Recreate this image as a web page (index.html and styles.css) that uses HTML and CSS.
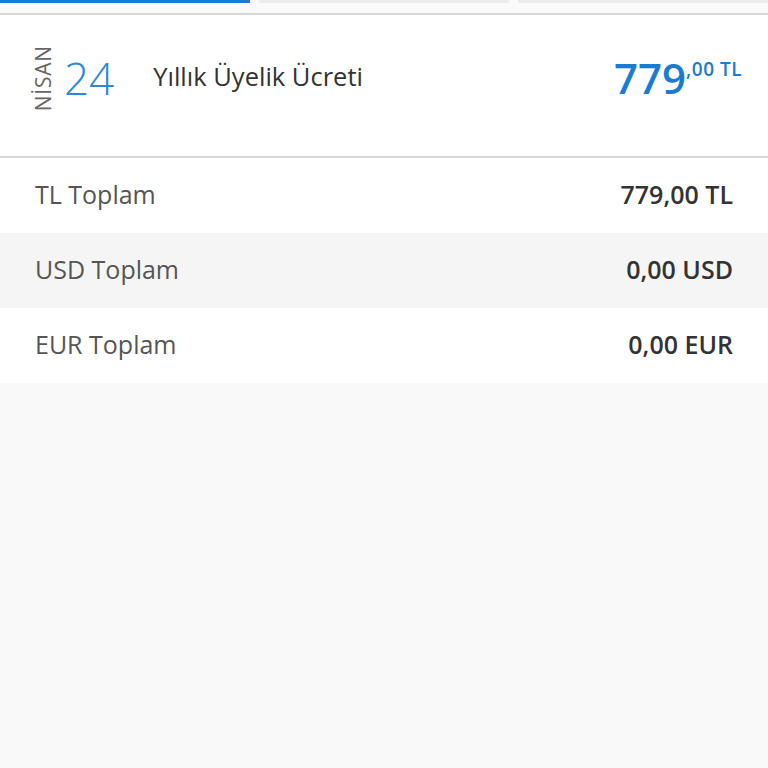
FILE: index.html
```html
<!DOCTYPE html>
<html lang="tr">
<head>
    <meta charset="UTF-8">
    <meta name="viewport" content="width=device-width, initial-scale=1.0">
    <title>Ödeme Detayı</title>
    <link rel="stylesheet" href="styles.css">
</head>
<body>
    <div class="tabs">
        <div class="tab active"></div>
        <div class="tab"></div>
        <div class="tab"></div>
    </div>

    <div class="item">
        <div class="date">
            <span class="month">NİSAN</span>
            <span class="day">24</span>
        </div>
        <div class="title">Yıllık Üyelik Ücreti</div>
        <div class="price">779<sup>,00 TL</sup></div>
    </div>

    <div class="totals">
        <div class="total-row">
            <span class="label">TL Toplam</span>
            <span class="value">779,00 TL</span>
        </div>
        <div class="total-row">
            <span class="label">USD Toplam</span>
            <span class="value">0,00 USD</span>
        </div>
        <div class="total-row">
            <span class="label">EUR Toplam</span>
            <span class="value">0,00 EUR</span>
        </div>
    </div>
</body>
</html>
```

FILE: styles.css
```css
body {
    font-family: 'Open Sans', 'Noto Sans', sans-serif;
    background-color: #f9f9f9;
    margin: 0;
    padding: 0;
}

.tabs {
    display: flex;
    gap: 9px;
    height: 13px;
    background-color: #fafafa;
    border-bottom: 2px solid #d8d8d8;
}

.tab {
    flex: 1;
    border-top: 3px solid #ececec;
}

.tab.active {
    border-top-color: #1a7bd6;
}

.item {
    display: flex;
    align-items: center;
    height: 141px;
    padding: 0 26px 0 32px;
    background-color: #fff;
    border-bottom: 2px solid #d6d6d6;
}

.date {
    display: flex;
    align-items: center;
    gap: 10px;
    margin-bottom: 15px;
}

.month {
    writing-mode: vertical-rl;
    transform: rotate(180deg);
    font-size: 21px;
    letter-spacing: 0.8px;
    color: #666;
    line-height: 22px;
}

.day {
    font-size: 44px;
    font-weight: 300;
    color: #2e88d4;
    line-height: 1;
}

.title {
    flex: 1;
    margin-left: 39px;
    margin-bottom: 19px;
    font-size: 25.5px;
    color: #333;
}

.price {
    margin-bottom: 15px;
    font-size: 42px;
    font-weight: 600;
    color: #1a7bd0;
    line-height: 1;
}

.price sup {
    font-size: 19px;
    font-weight: 600;
    letter-spacing: 0.5px;
    vertical-align: 18px;
}

.total-row {
    display: flex;
    justify-content: space-between;
    align-items: center;
    height: 75px;
    padding: 0 35px 3px;
    box-sizing: border-box;
    background-color: #fff;
    font-size: 25px;
}

.total-row:nth-child(2) {
    background-color: #f5f5f5;
}

.label {
    color: #555;
}

.value {
    font-weight: 600;
    color: #333;
}
```
